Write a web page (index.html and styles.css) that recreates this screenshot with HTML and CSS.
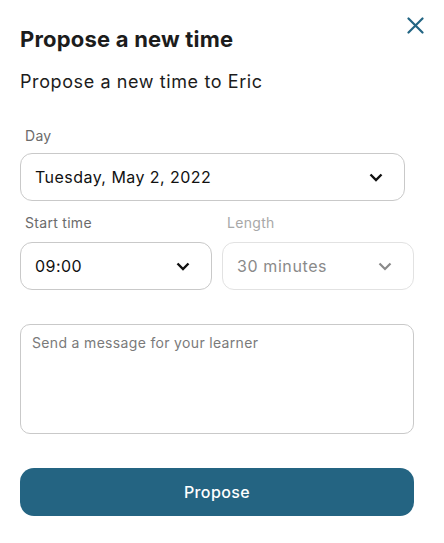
FILE: index.html
```html
<!DOCTYPE html>
<html>
<head>
<meta charset="utf-8">
<link rel="stylesheet" href="styles.css">
</head>
<body>
<div class="dialog">
  <button class="close" aria-label="Close">
    <svg width="17" height="17" viewBox="0 0 17 17"><path d="M1.5 1.5 L15.5 15.5 M15.5 1.5 L1.5 15.5" stroke="#236583" stroke-width="2.2" stroke-linecap="round" fill="none"/></svg>
  </button>
  <h1 class="title">Propose a new time</h1>
  <p class="subtitle">Propose a new time to Eric</p>

  <div class="field day">
    <div class="label">Day</div>
    <div class="select day-select">
      <span class="value">Tuesday, May 2, 2022</span>
      <svg class="chev" width="14" height="9" viewBox="0 0 14 9"><path d="M1.5 1.5 L7 7 L12.5 1.5" stroke="#111" stroke-width="2.4" fill="none" stroke-linejoin="miter"/></svg>
    </div>
  </div>

  <div class="row">
    <div class="field">
      <div class="label">Start time</div>
      <div class="select">
        <span class="value">09:00</span>
        <svg class="chev" width="14" height="9" viewBox="0 0 14 9"><path d="M1.5 1.5 L7 7 L12.5 1.5" stroke="#111" stroke-width="2.4" fill="none"/></svg>
      </div>
    </div>
    <div class="field disabled">
      <div class="label">Length</div>
      <div class="select">
        <span class="value">30 minutes</span>
        <svg class="chev" width="14" height="9" viewBox="0 0 14 9"><path d="M1.5 1.5 L7 7 L12.5 1.5" stroke="#8a8a8a" stroke-width="2.2" fill="none"/></svg>
      </div>
    </div>
  </div>

  <div class="textarea">Send a message for your learner</div>

  <button class="propose">Propose</button>
</div>
</body>
</html>
```
FILE: styles.css
```css
* { box-sizing: border-box; }
html, body { margin: 0; padding: 0; background: #fff; }
body {
  font-family: Inter, "Noto Sans", "Liberation Sans", sans-serif;
  color: #1c1c1c;
  width: 444px;
  height: 543px;
  overflow: hidden;
}
.dialog {
  position: relative;
  padding: 26px 30px 0 20px;
}
.close {
  position: absolute;
  top: 17px;
  right: 20px;
  width: 17px;
  height: 17px;
  padding: 0;
  border: 0;
  background: none;
  display: flex;
}
.title {
  margin: 0;
  font-size: 22px;
  line-height: 26px;
  font-weight: 700;
  letter-spacing: 0.2px;
  color: #1c1c1c;
}
.subtitle {
  margin: 18px 0 0;
  font-size: 18px;
  line-height: 24px;
  letter-spacing: 0.6px;
  color: #1c1c1c;
}
.field { display: flex; flex-direction: column; }
.day { margin-top: 33px; width: 385px; }
.label {
  font-size: 14px;
  line-height: 18px;
  letter-spacing: 0.3px;
  color: #6b6b6b;
  padding-left: 5px;
  margin-bottom: 8px;
}
.select {
  height: 48px;
  border: 1px solid #c9c9c9;
  border-radius: 12px;
  display: flex;
  align-items: center;
  justify-content: space-between;
  padding: 0 21px 0 14px;
  font-size: 16px;
  letter-spacing: 0.45px;
  color: #111;
}
.chev { display: block; }
.row {
  margin-top: 13px;
  display: grid;
  grid-template-columns: 192px 192px;
  gap: 10px;
}
.row .label { margin-bottom: 10px; }
.row .select { padding-right: 21px; }
.disabled .label { color: #a8a8a8; }
.disabled .select { border-color: #e2e2e2; color: #8a8a8a; letter-spacing: 0.6px; }
.textarea {
  margin-top: 34px;
  width: 394px;
  height: 110px;
  border: 1px solid #c9c9c9;
  border-radius: 10px;
  padding: 9px 11px;
  font-size: 14px;
  line-height: 18px;
  letter-spacing: 0.33px;
  color: #7a7a7a;
}
.propose {
  margin-top: 34px;
  width: 394px;
  height: 48px;
  border: 0;
  border-radius: 14px;
  background: #246482;
  color: #fff;
  font-family: Inter, "Noto Sans", "Liberation Sans", sans-serif;
  font-size: 16px;
  font-weight: 500;
  letter-spacing: 0.4px;
  display: block;
}
```
